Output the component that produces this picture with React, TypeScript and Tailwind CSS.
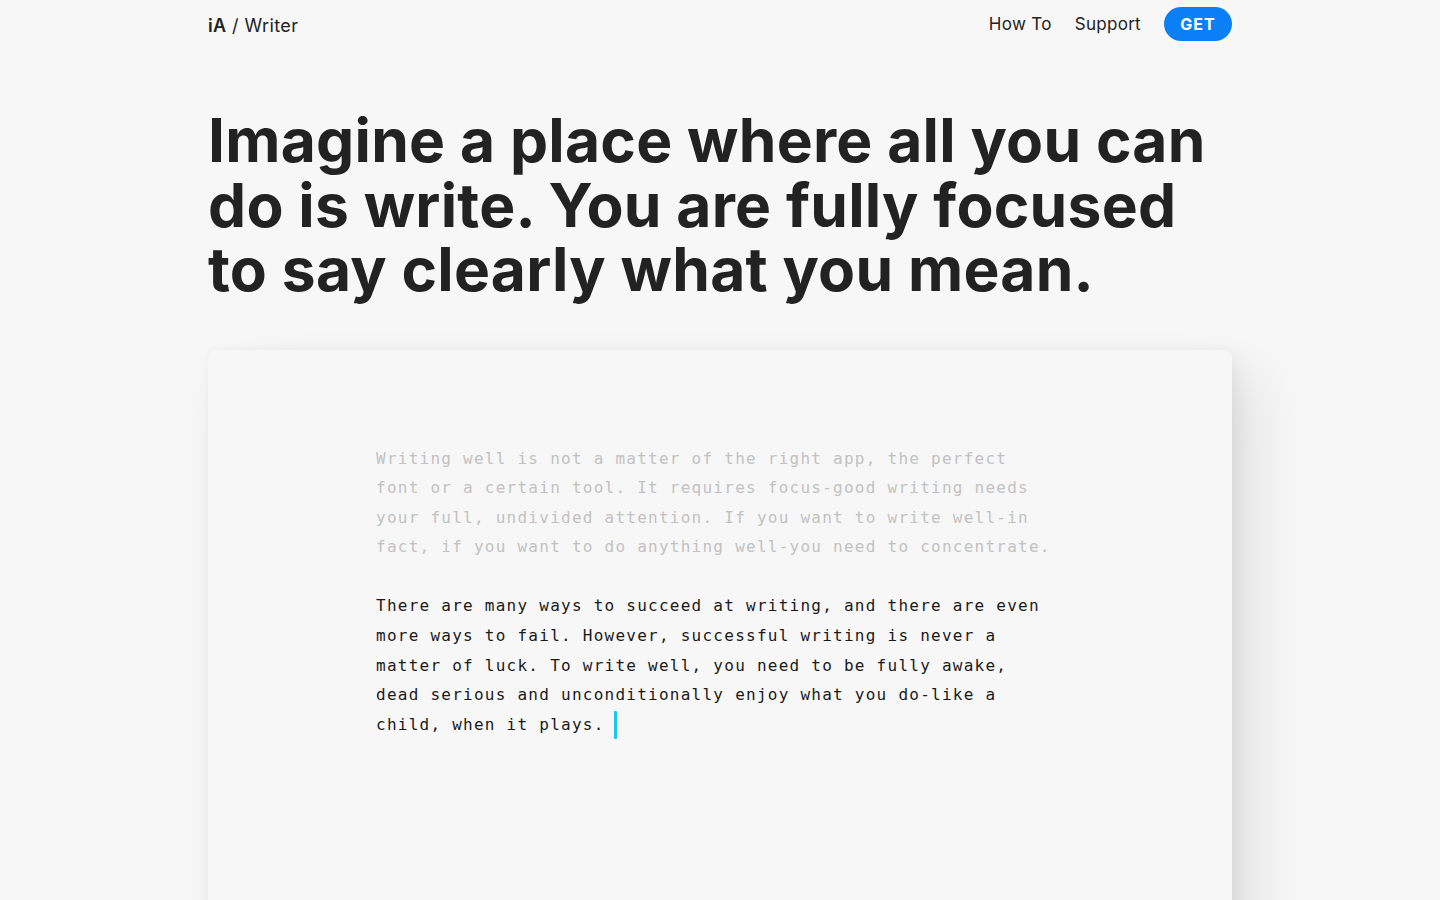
import React from "react";

const faded = [
  "Writing well is not a matter of the right app, the perfect",
  "font or a certain tool. It requires focus-good writing needs",
  "your full, undivided attention. If you want to write well-in",
  "fact, if you want to do anything well-you need to concentrate.",
];

const active = [
  "There are many ways to succeed at writing, and there are even",
  "more ways to fail. However, successful writing is never a",
  "matter of luck. To write well, you need to be fully awake,",
  "dead serious and unconditionally enjoy what you do-like a",
];

const App = () => {
  return (
    <div className="min-h-screen bg-[#f7f7f7] overflow-hidden font-['Inter',sans-serif] text-[#222]">
      <div className="mx-auto w-[1024px]">
        {/* Top nav */}
        <header className="flex h-12 items-center justify-between">
          <div className="pt-[2px] text-[18px] tracking-[0.4px]">
            <span className="font-semibold">iA</span> / Writer
          </div>
          <nav className="flex items-center gap-[23px] text-[17px]">
            <a className="pt-[2px] tracking-[0.3px]">How To</a>
            <a className="pt-[2px] tracking-[0.3px]">Support</a>
            <button className="h-[34px] w-[68px] rounded-full bg-[#0b80f6] text-[16px] font-bold tracking-[1px] text-white">
              GET
            </button>
          </nav>
        </header>

        <h1 className="mt-[60px] text-[60.5px] font-bold leading-[64.5px] tracking-[0.25px] text-[#222]">
          Imagine a place where all you can
          <br />
          do is write. You are fully focused
          <br />
          to say clearly what you mean.
        </h1>

        {/* Editor sheet */}
        <div className="mt-[48px] h-[600px] rounded-t-[8px] bg-[#f7f7f7] shadow-[24px_24px_60px_rgba(0,0,0,0.09),6px_8px_18px_rgba(0,0,0,0.05),0_-2px_10px_rgba(0,0,0,0.02)]">
          <div className="pl-[168px] pt-[94px] font-['DejaVu_Sans_Mono',monospace] text-[16px] leading-[29.6px] tracking-[1.25px]">
            <div className="text-[#c2c2c2]">
              {faded.map((l) => (
                <div key={l}>{l}</div>
              ))}
            </div>
            <div className="mt-[29.6px] text-[#1a1a1a]">
              {active.map((l) => (
                <div key={l}>{l}</div>
              ))}
              <div className="flex items-center">
                <span>child, when it plays.</span>
                <span className="ml-[9px] inline-block h-[28px] w-[3px] rounded-[1px] bg-[#1cc4f2]" />
              </div>
            </div>
          </div>
        </div>
      </div>
    </div>
  );
};

export default App;
